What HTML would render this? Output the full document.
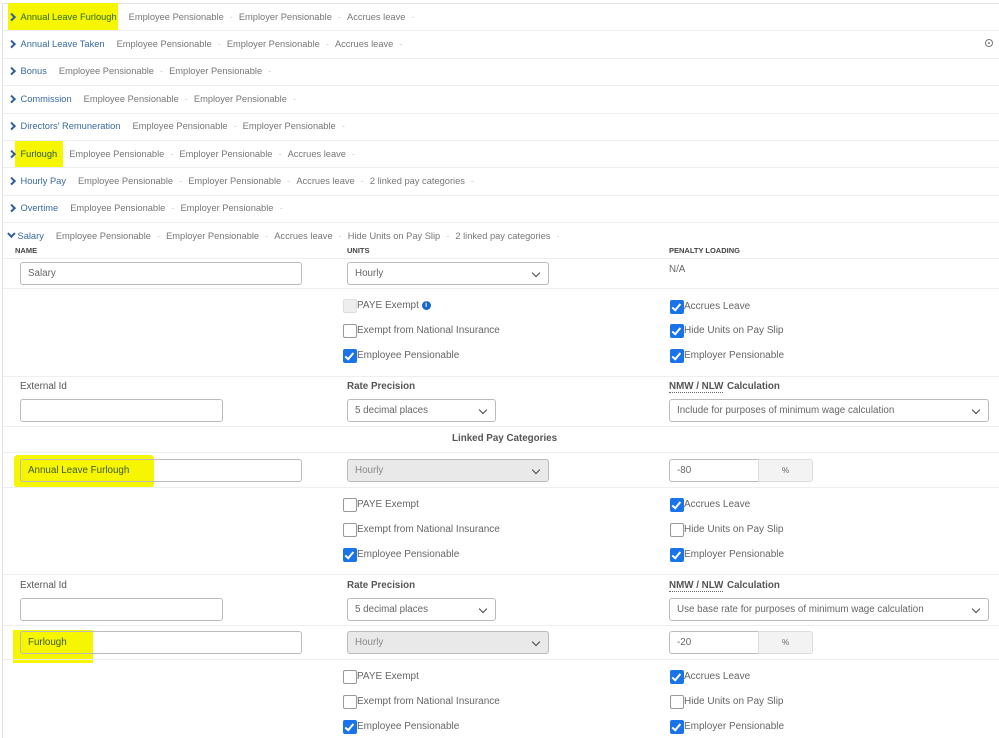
<!DOCTYPE html>
<html><head><meta charset="utf-8"><style>
*{margin:0;padding:0;box-sizing:border-box}
body{width:999px;height:738px;background:#fff;position:relative;overflow:hidden;font-family:"Liberation Sans",sans-serif;color:#555}
.a{position:absolute}
.hl{position:absolute;background:#f6f600}
.row{position:absolute;left:9px;font-size:9.3px;color:#777;white-space:nowrap;line-height:12px}
.row b{font-weight:normal;color:#3a6aa0}
.row i{font-style:normal;color:#ccc;margin:0 6px}
.row .chev{display:inline-block;width:5.5px;height:5.5px;border-right:2px solid #2b5f99;border-top:2px solid #2b5f99;transform:rotate(45deg);margin:0 6px 1px 0}
.sep{position:absolute;left:3px;right:0;height:1px;background:#eceef0}
.inp{position:absolute;height:23px;border:1px solid #bbb;border-radius:3px;background:#fff;font-size:9.8px;color:#666;padding:0 7px;line-height:21px}
.sel:after{content:"";position:absolute;right:9px;top:7px;width:5px;height:5px;border-right:1.8px solid #444;border-bottom:1.8px solid #444;transform:rotate(45deg)}
.dis{background:#e9e9e9;color:#888}
.lbl{position:absolute;font-size:9.8px;font-weight:bold;color:#555}
.cap{position:absolute;font-size:7.5px;font-weight:bold;color:#444}
.cb{position:absolute;font-size:10px;color:#666;line-height:13px;white-space:nowrap;padding-left:14px}
.cb:before{content:"";position:absolute;left:0;top:0;width:12px;height:12px;border:1px solid #999;border-radius:2px;background:#fff}
.cb.on:before{background:#1a73e8;border-color:#1a73e8}
.cb.on:after{content:"";position:absolute;left:4px;top:1.5px;width:3px;height:6.5px;border-right:2px solid #fff;border-bottom:2px solid #fff;transform:rotate(40deg)}
.cb.dd:before{background:#eee;border-color:#ddd}
</style></head><body>
<div class="a" style="left:2px;top:3px;width:1px;height:735px;background:#e2e2e2"></div>
<div class="a" style="left:2px;top:3px;right:0;height:1px;background:#e2e2e2"></div>

<div class="hl" style="left:8px;top:3px;width:110px;height:28px"></div>
<div class="hl" style="left:15px;top:141px;width:48px;height:26px"></div>
<div class="hl" style="left:14px;top:455px;width:140px;height:33px;border-radius:4px"></div>
<div class="hl" style="left:13px;top:630px;width:80px;height:33px"></div>

<div class="row" style="top:11px"><span class="chev"></span><b style="color:#2d6a1c">Annual Leave Furlough</b><i></i>Employee Pensionable<i>-</i>Employer Pensionable<i>-</i>Accrues leave<i>-</i></div>
<div class="sep" style="top:30px"></div>
<div class="row" style="top:38px"><span class="chev"></span><b>Annual Leave Taken</b><i></i>Employee Pensionable<i>-</i>Employer Pensionable<i>-</i>Accrues leave<i>-</i></div>
<div class="a" style="left:985px;top:39px;width:8px;height:8px;border:1.5px solid #777;border-radius:50%"><div style="margin:1.5px;width:2px;height:2px;background:#777;border-radius:50%"></div></div>
<div class="sep" style="top:58px"></div>
<div class="row" style="top:65px"><span class="chev"></span><b>Bonus</b><i></i>Employee Pensionable<i>-</i>Employer Pensionable<i>-</i></div>
<div class="sep" style="top:85px"></div>
<div class="row" style="top:93px"><span class="chev"></span><b>Commission</b><i></i>Employee Pensionable<i>-</i>Employer Pensionable<i>-</i></div>
<div class="sep" style="top:113px"></div>
<div class="row" style="top:120px"><span class="chev"></span><b>Directors' Remuneration</b><i></i>Employee Pensionable<i>-</i>Employer Pensionable<i>-</i></div>
<div class="sep" style="top:140px"></div>
<div class="row" style="top:148px"><span class="chev"></span><b style="color:#2d5a40">Furlough</b><i></i>Employee Pensionable<i>-</i>Employer Pensionable<i>-</i>Accrues leave<i>-</i></div>
<div class="sep" style="top:167px"></div>
<div class="row" style="top:175px"><span class="chev"></span><b>Hourly Pay</b><i></i>Employee Pensionable<i>-</i>Employer Pensionable<i>-</i>Accrues leave<i>-</i>2 linked pay categories<i>-</i></div>
<div class="sep" style="top:195px"></div>
<div class="row" style="top:202px"><span class="chev"></span><b>Overtime</b><i></i>Employee Pensionable<i>-</i>Employer Pensionable<i>-</i></div>
<div class="sep" style="top:222px"></div>
<div class="row" style="top:230px"><span class="chev" style="transform:rotate(135deg);margin-right:3px;margin-bottom:3px"></span><b>Salary</b><i></i>Employee Pensionable<i>-</i>Employer Pensionable<i>-</i>Accrues leave<i>-</i>Hide Units on Pay Slip<i>-</i>2 linked pay categories<i>-</i></div>

<div class="cap" style="left:15px;top:246px">NAME</div>
<div class="cap" style="left:347px;top:246px">UNITS</div>
<div class="cap" style="left:669px;top:246px">PENALTY LOADING</div>
<div class="sep" style="top:258px"></div>
<div class="inp" style="left:20px;top:262px;width:282px">Salary</div>
<div class="inp sel" style="left:347px;top:262px;width:202px">Hourly</div>
<div class="a" style="left:669px;top:264px;font-size:9.8px;color:#666">N/A</div>
<div class="sep" style="top:288px"></div>
<div class="cb dd" style="left:343px;top:299px">PAYE Exempt <span style="display:inline-block;width:9px;height:9px;border-radius:50%;background:#1a66c8;color:#fff;font-size:7px;line-height:9px;text-align:center;font-weight:bold;vertical-align:1px">i</span></div>
<div class="cb" style="left:343px;top:324px">Exempt from National Insurance</div>
<div class="cb on" style="left:343px;top:349px">Employee Pensionable</div>
<div class="cb on" style="left:670px;top:300px">Accrues Leave</div>
<div class="cb on" style="left:670px;top:324px">Hide Units on Pay Slip</div>
<div class="cb on" style="left:670px;top:349px">Employer Pensionable</div>
<div class="sep" style="top:376px"></div>

<div class="lbl" style="left:20px;top:381px;font-weight:normal">External Id</div>
<div class="lbl" style="left:347px;top:381px">Rate Precision</div>
<div class="lbl" style="left:669px;top:381px;border-bottom:1px dotted #666;line-height:11px">NMW / NLW</div>
<div class="lbl" style="left:727px;top:381px">Calculation</div>
<div class="inp" style="left:20px;top:399px;width:203px"></div>
<div class="inp sel" style="left:347px;top:399px;width:149px">5 decimal places</div>
<div class="inp sel" style="left:669px;top:399px;width:320px">Include for purposes of minimum wage calculation</div>
<div class="sep" style="top:426px"></div>
<div class="lbl" style="left:452px;top:433px">Linked Pay Categories</div>
<div class="sep" style="top:452px"></div>

<div class="inp" style="left:20px;top:459px;width:282px;background:transparent;color:#3d5a20">Annual Leave Furlough</div>
<div class="inp sel dis" style="left:347px;top:459px;width:202px">Hourly</div>
<div class="inp" style="left:669px;top:459px;width:90px;border-radius:3px 0 0 3px">-80</div>
<div class="inp" style="left:758px;top:459px;width:55px;background:#f3f3f3;border-color:#ddd;border-radius:0 3px 3px 0;text-align:center;font-size:8px">%</div>
<div class="sep" style="top:487px"></div>
<div class="cb" style="left:343px;top:498px">PAYE Exempt</div>
<div class="cb" style="left:343px;top:523px">Exempt from National Insurance</div>
<div class="cb on" style="left:343px;top:548px">Employee Pensionable</div>
<div class="cb on" style="left:670px;top:498px">Accrues Leave</div>
<div class="cb" style="left:670px;top:523px">Hide Units on Pay Slip</div>
<div class="cb on" style="left:670px;top:548px">Employer Pensionable</div>
<div class="sep" style="top:574px"></div>

<div class="lbl" style="left:20px;top:580px;font-weight:normal">External Id</div>
<div class="lbl" style="left:347px;top:580px">Rate Precision</div>
<div class="lbl" style="left:669px;top:580px;border-bottom:1px dotted #666;line-height:11px">NMW / NLW</div>
<div class="lbl" style="left:727px;top:580px">Calculation</div>
<div class="inp" style="left:20px;top:598px;width:203px"></div>
<div class="inp sel" style="left:347px;top:598px;width:149px">5 decimal places</div>
<div class="inp sel" style="left:669px;top:598px;width:320px">Use base rate for purposes of minimum wage calculation</div>
<div class="sep" style="top:625px"></div>

<div class="inp" style="left:20px;top:631px;width:282px;background:transparent;color:#3d5a20">Furlough</div>
<div class="inp sel dis" style="left:347px;top:631px;width:202px">Hourly</div>
<div class="inp" style="left:669px;top:631px;width:90px;border-radius:3px 0 0 3px">-20</div>
<div class="inp" style="left:758px;top:631px;width:55px;background:#f3f3f3;border-color:#ddd;border-radius:0 3px 3px 0;text-align:center;font-size:8px">%</div>
<div class="sep" style="top:659px"></div>
<div class="cb" style="left:343px;top:670px">PAYE Exempt</div>
<div class="cb" style="left:343px;top:695px">Exempt from National Insurance</div>
<div class="cb on" style="left:343px;top:720px">Employee Pensionable</div>
<div class="cb on" style="left:670px;top:670px">Accrues Leave</div>
<div class="cb" style="left:670px;top:695px">Hide Units on Pay Slip</div>
<div class="cb on" style="left:670px;top:720px">Employer Pensionable</div>
</body></html>
